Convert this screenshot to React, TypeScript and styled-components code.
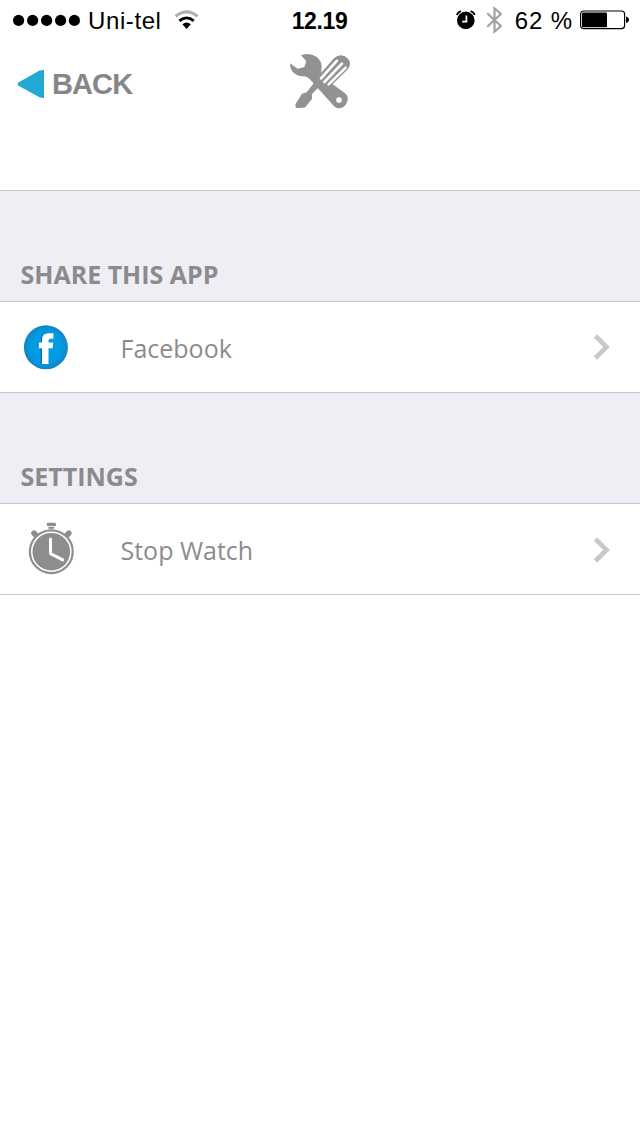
import React from "react";
import styled, { createGlobalStyle } from "styled-components";

const GlobalStyle = createGlobalStyle`
  * { box-sizing: border-box; }
  body { margin: 0; background: #fff; }
  svg { display: block; flex: none; }
`;

const Screen = styled.main`
  width: 640px;
  min-height: 1136px;
  background: #fff;
  font-family: "Open Sans", sans-serif;
  color: #8c8c8c;
`;

const StatusBar = styled.div`
  display: grid;
  grid-template-columns: 1fr auto 1fr;
  align-items: center;
  height: 40px;
  padding: 0 11px 0 12px;
  font-family: "Liberation Sans", Arial, sans-serif;
  font-size: 24px;
  line-height: 28px;
  color: #000;
`;

const StatusGroup = styled.div<{ $end?: boolean }>`
  display: flex;
  align-items: center;
  justify-content: ${(p) => (p.$end ? "flex-end" : "flex-start")};
`;

const StatusText = styled.span<{ $spacing?: number }>`
  letter-spacing: ${(p) => p.$spacing ?? 0}px;
  padding-top: 2px;
  white-space: pre;
`;

const Clock = styled(StatusText)`
  padding-right: 2px;
  font-size: 23px;
  font-weight: 700;
`;

const Carrier = styled(StatusText)`
  margin: 0 12px 0 6px;
`;

const Percent = styled(StatusText)`
  margin: 0 7px 0 12px;
`;

const NavBar = styled.header`
  display: grid;
  grid-template-columns: 1fr auto 1fr;
  align-items: start;
  height: 151px;
  border-bottom: 1px solid #c8c7cc;
`;

const BackButton = styled.button`
  display: flex;
  align-items: center;
  gap: 8px;
  height: 88px;
  margin: 0;
  padding: 0 0 0 17px;
  border: 0;
  background: none;
  color: #868686;
  font: 700 29px/32px "Liberation Sans", Arial, sans-serif;
  letter-spacing: -0.9px;
`;

const NavIcon = styled.div`
  padding-top: 6px;
`;

const SectionTitle = styled.h2`
  display: flex;
  align-items: flex-end;
  height: 111px;
  margin: 0;
  padding: 0 20.5px 10px;
  background: #efeef4;
  border-bottom: 1px solid #c8c7cc;
  font-size: 25px;
  font-weight: 700;
  line-height: 34px;
  color: #8b8b8b;
`;

const Row = styled.div`
  display: flex;
  align-items: center;
  height: 91px;
  padding: 0 29px 0 20px;
  border-bottom: 1px solid #c8c7cc;
`;

const RowIcon = styled.div`
  width: 100.5px;
`;

const RowLabel = styled.span`
  flex: 1;
  padding-top: 2px;
  font-size: 25px;
  line-height: 34px;
  color: #8c8c8c;
`;

const SignalDots = () => (
  <svg width="70" height="14" viewBox="0 0 70 14">
    {[6.6, 20.6, 34.6, 48.6, 62.4].map((x) => (
      <circle key={x} cx={x} cy="7.4" r="5.6" />
    ))}
  </svg>
);

const Wifi = () => (
  <svg width="26" height="20" viewBox="0 0 26 20" fill="none">
    <path d="M1.6 6.4Q12.6-2.6 23.6 6.4" stroke="#b0b0b0" strokeWidth="3" />
    <path d="M5.4 10.8Q12.6 5 19.8 10.8" stroke="#000" strokeWidth="2.8" />
    <path d="M8.4 14.2Q12.6 10.6 16.8 14.2L12.6 19Z" fill="#000" />
  </svg>
);

const AlarmGlyph = styled.svg`
  margin-right: 10px;
`;

const Alarm = () => (
  <AlarmGlyph width="20" height="20" viewBox="0 0 20 20" fill="none">
    <circle cx="9.8" cy="10.4" r="8.8" fill="#000" />
    <path d="M.9 5Q1.8 2 5 1.1M14.6 1.1Q17.8 2 18.7 5" stroke="#000" strokeWidth="1.7" />
    <path d="M10.4 5.4V11.6H6.2" stroke="#fff" strokeWidth="1.7" />
  </AlarmGlyph>
);

const Bluetooth = () => (
  <svg width="17" height="28" viewBox="0 0 17 28" fill="none" stroke="#a2a2a2" strokeWidth="2.2">
    <path d="M1.2 7.2L14.8 20L8.5 25.7V2.3L14.8 8L1.2 20.8" />
  </svg>
);

const Battery = () => (
  <svg width="49" height="20" viewBox="0 0 49 20">
    <rect x=".6" y="1" width="44" height="17.6" rx="3" fill="none" stroke="#000" strokeWidth="1.2" />
    <rect x="2" y="2.4" width="25" height="14.8" rx="1" />
    <path d="M46 6.6Q49 7.4 49 9.8T46 13Z" />
  </svg>
);

const BackArrow = () => (
  <svg width="27" height="28" viewBox="0 0 27 28">
    <path d="M.8 14.2L1 12.8L22.5 .6Q24 0 27 0V28Q24 28 22.5 27.3L1 15.5Z" fill="#22a8d5" />
  </svg>
);

const Tools = () => (
  <svg width="72" height="70" viewBox="0 0 216 210">
    <path
      fill="#929292"
      d="M18 52L41 68L61 63L67 46L51 28Q76 18 97 32Q114 44 113 66L110 88L183 142Q195 152 190 166Q184 186 166 187Q154 187 146 176L83 106Q72 91 57 91Q36 91 24 75Q17 64 18 52Z"
    />
    <circle cx="165" cy="162" r="8.5" fill="#fff" />
    <path fill="#929292" d="M95 104L110 118L84 144L84 158L64 184Q50 187 35 185L34 175L54 143L68 139Z" />
    <path
      fill="#929292"
      d="M103 90L150 37Q160 28 171 28Q184 29 192 38Q200 47 197 60Q195 67 187 74L134 126L116 123L101 108Z"
    />
    <path d="M111 97L159 44M121 108L174 53M134 115L185 65" stroke="#fff" strokeWidth="8" strokeLinecap="round" />
  </svg>
);

const FacebookLogo = () => (
  <svg width="52" height="52" viewBox="0 0 52 52">
    <defs>
      <radialGradient id="fb">
        <stop offset="0" stopColor="#00a2e8" />
        <stop offset=".75" stopColor="#0299df" />
        <stop offset="1" stopColor="#1682c0" />
      </radialGradient>
    </defs>
    <circle cx="25.9" cy="26.3" r="22" fill="url(#fb)" />
    <path
      fill="#0868d2"
      d="M20.8 42.8V27H17.6V21.4H20.8V18Q20.8 12.2 26.8 12.2H32V17.6H28.8Q27 17.6 27 19.4V21.4H32L31.4 27H27V42.8Z"
    />
    <path
      fill="#fff"
      d="M22 43V27.2H18.7V21.6H22V18.2Q22 12.2 28.2 12.2H33.4V17.8H30.2Q28.5 17.8 28.5 19.6V21.6H33.2L32.6 27.2H28.5V43Z"
    />
  </svg>
);

const StopWatchGlyph = styled.svg`
  margin-bottom: 2px;
`;

const StopWatch = () => (
  <StopWatchGlyph width="62" height="54" viewBox="0 0 62 54" fill="none">
    <rect x="26.8" y="1.8" width="9.2" height="3.2" rx="1" fill="#8d8d8d" />
    <path d="M28.4 6.8H34.2" stroke="#8d8d8d" strokeWidth="2" />
    <path d="M14 12.2L18 16.2M48.8 12.2L44.8 16.2" stroke="#8d8d8d" strokeWidth="5.6" strokeLinecap="round" />
    <circle cx="31.3" cy="30.7" r="21.4" fill="#fff" stroke="#8d8d8d" strokeWidth="2.2" />
    <circle cx="31.3" cy="30.7" r="18.8" fill="#8d8d8d" />
    <path d="M30.5 18V32.6L42.7 38.9" stroke="#fff" strokeWidth="3" strokeLinecap="round" strokeLinejoin="round" />
  </StopWatchGlyph>
);

const ChevronGlyph = styled.svg<{ $drop: number }>`
  margin-top: ${(p) => p.$drop}px;
`;

const Chevron = ({ drop = 0 }: { drop?: number }) => (
  <ChevronGlyph $drop={drop} width="18" height="28" viewBox="0 0 18 28" fill="none">
    <path d="M2.4 3L13.6 14L2.4 25" stroke="#c7c7cc" strokeWidth="4.6" />
  </ChevronGlyph>
);

export default function App() {
  return (
    <Screen>
      <GlobalStyle />
      <StatusBar>
        <StatusGroup>
          <SignalDots />
          <Carrier $spacing={0.6}>Uni-tel</Carrier>
          <Wifi />
        </StatusGroup>
        <Clock $spacing={-0.4}>12.19</Clock>
        <StatusGroup $end>
          <Alarm />
          <Bluetooth />
          <Percent $spacing={0.9}>62 %</Percent>
          <Battery />
        </StatusGroup>
      </StatusBar>
      <NavBar>
        <BackButton>
          <BackArrow />
          BACK
        </BackButton>
        <NavIcon>
          <Tools />
        </NavIcon>
      </NavBar>
      <SectionTitle>SHARE THIS APP</SectionTitle>
      <Row>
        <RowIcon>
          <FacebookLogo />
        </RowIcon>
        <RowLabel>Facebook</RowLabel>
        <Chevron />
      </Row>
      <SectionTitle>SETTINGS</SectionTitle>
      <Row>
        <RowIcon>
          <StopWatch />
        </RowIcon>
        <RowLabel>Stop Watch</RowLabel>
        <Chevron drop={2} />
      </Row>
    </Screen>
  );
}
